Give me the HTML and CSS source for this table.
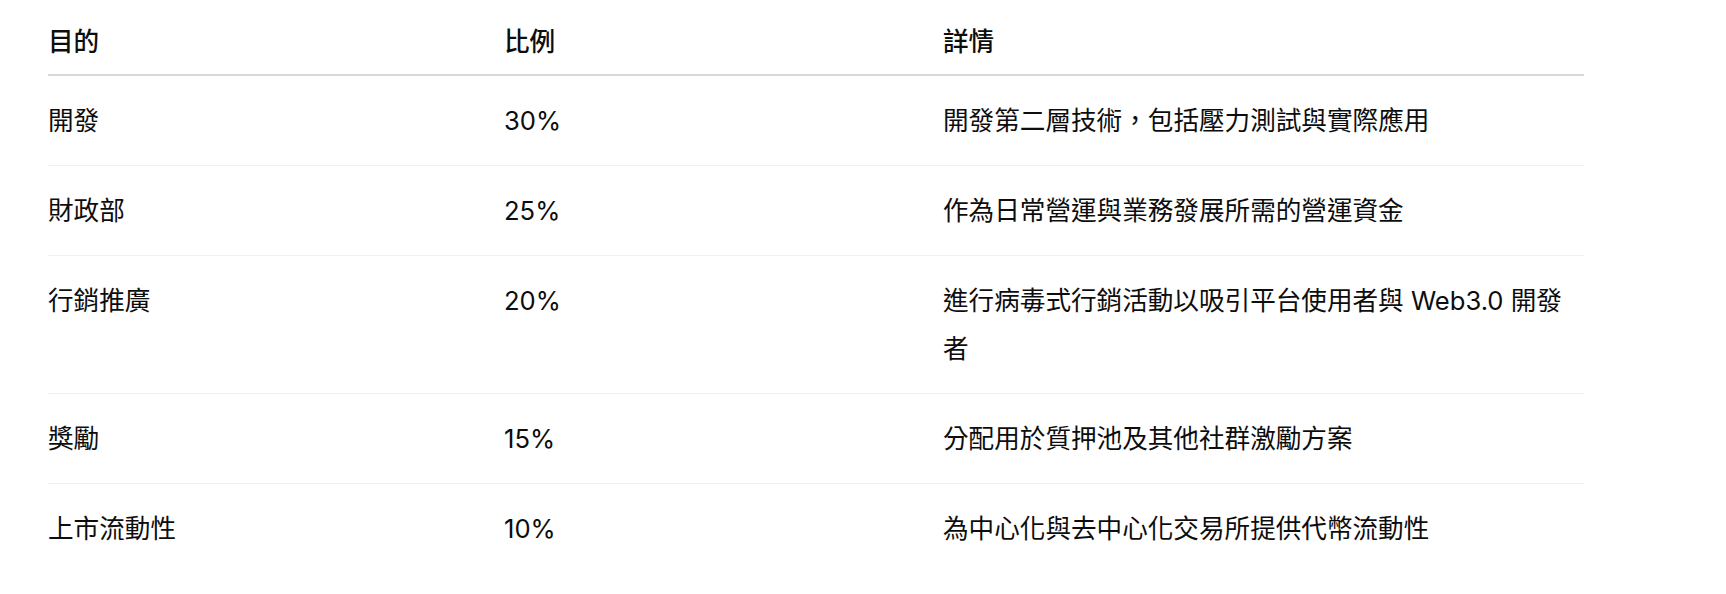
FILE: index.html
```html
<!DOCTYPE html>
<html lang="zh-Hant">
<head>
<meta charset="utf-8">
<title>代幣分配</title>
<link rel="stylesheet" href="styles.css">
</head>
<body>
<main class="page">
  <table class="alloc">
    <colgroup>
      <col class="c1">
      <col class="c2">
      <col class="c3">
    </colgroup>
    <thead>
      <tr><th>目的</th><th>比例</th><th>詳情</th></tr>
    </thead>
    <tbody>
      <tr><td>開發</td><td>30%</td><td>開發第二層技術<span class="punct">，</span>包括壓力測試與實際應用</td></tr>
      <tr><td>財政部</td><td>25%</td><td>作為日常營運與業務發展所需的營運資金</td></tr>
      <tr><td>行銷推廣</td><td>20%</td><td>進行病毒式行銷活動以吸引平台使用者與 Web3.0 開發者</td></tr>
      <tr><td>獎勵</td><td>15%</td><td>分配用於質押池及其他社群激勵方案</td></tr>
      <tr><td>上市流動性</td><td>10%</td><td>為中心化與去中心化交易所提供代幣流動性</td></tr>
    </tbody>
  </table>
</main>
</body>
</html>
```
FILE: styles.css
```css
html, body {
  margin: 0;
  padding: 0;
  background: #ffffff;
}

.page {
  padding: 18px 0 0 48px;
}

.alloc {
  width: 1536px;
  table-layout: fixed;
  border-collapse: collapse;
  border-spacing: 0;
  font-family: Inter, "Noto Sans CJK TC", sans-serif;
  font-size: 25.6px;
  line-height: 48px;
  color: #0d0d0d;
  text-spacing-trim: space-all;
}

.c1 { width: 456px; }
.c2 { width: 439px; }
.c3 { width: 641px; }

.alloc th {
  text-align: left;
  font-weight: 500;
  padding: 0 10px 8px 0;
  border-bottom: 2px solid #d9d9d9;
}

.alloc td {
  text-align: left;
  vertical-align: top;
  font-weight: 400;
  padding: 20.5px 10px 20.5px 0;
  border-bottom: 1px solid #f0f0f0;
}

.alloc tbody tr:last-child td {
  border-bottom: none;
}

.punct {
  font-family: "Noto Sans CJK SC", sans-serif;
  line-height: 1;
  letter-spacing: 0;
}
```
